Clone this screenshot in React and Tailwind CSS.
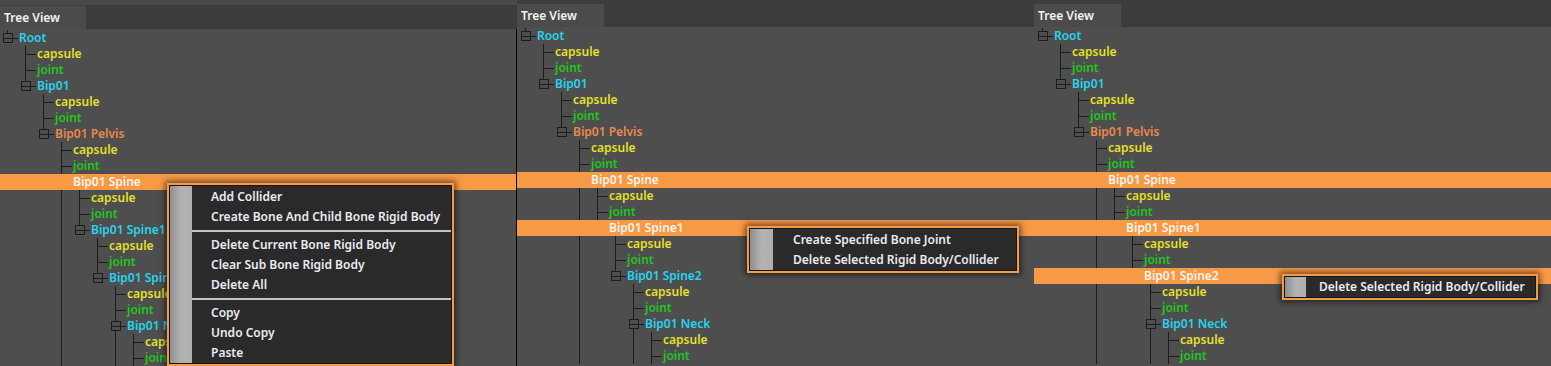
import React from "react";

const CYAN = "#27d4ef";
const YELLOW = "#e4e02c";
const GREEN = "#1fc61f";
const ORANGE = "#ec894c";
const LINE = "#1c1c1c";
const TREE_BG = "#4e4e4e";

// depth, label, colour, has expander box, last child, ancestor lines still running
const ROWS = [
  { d: 0, t: "Root", c: CYAN, box: true, last: true, anc: [] },
  { d: 1, t: "capsule", c: YELLOW, anc: [] },
  { d: 1, t: "joint", c: GREEN, anc: [] },
  { d: 1, t: "Bip01", c: CYAN, box: true, last: true, anc: [] },
  { d: 2, t: "capsule", c: YELLOW, anc: [] },
  { d: 2, t: "joint", c: GREEN, anc: [] },
  { d: 2, t: "Bip01 Pelvis", c: ORANGE, box: true, last: true, anc: [] },
  { d: 3, t: "capsule", c: YELLOW, anc: [] },
  { d: 3, t: "joint", c: GREEN, anc: [] },
  { d: 3, t: "Bip01 Spine", c: CYAN, box: true, anc: [] },
  { d: 4, t: "capsule", c: YELLOW, anc: [3] },
  { d: 4, t: "joint", c: GREEN, anc: [3] },
  { d: 4, t: "Bip01 Spine1", c: CYAN, box: true, last: true, anc: [3] },
  { d: 5, t: "capsule", c: YELLOW, anc: [3] },
  { d: 5, t: "joint", c: GREEN, anc: [3] },
  { d: 5, t: "Bip01 Spine2", c: CYAN, box: true, last: true, anc: [3] },
  { d: 6, t: "capsule", c: YELLOW, anc: [3] },
  { d: 6, t: "joint", c: GREEN, anc: [3] },
  { d: 6, t: "Bip01 Neck", c: CYAN, box: true, anc: [3] },
  { d: 7, t: "capsule", c: YELLOW, anc: [3, 6] },
  { d: 7, t: "joint", c: GREEN, anc: [3, 6] },
];

const Guides = ({ row, hidden }) => {
  const { d } = row;
  const cx = 7 + 18 * d;
  return (
    <svg width={19 + 18 * d} height="16" className="shrink-0">
      {!hidden && (
        <g fill={LINE}>
          {row.anc.map((k) => (
            <rect key={k} x={7 + 18 * k} y="0" width="1" height="16" />
          ))}
          <rect x={cx} y="0" width="1" height={row.last ? 9 : 16} />
          {row.box && (
            <rect x={cx - 3.5} y="3.5" width="9" height="9" fill={TREE_BG} stroke={LINE} strokeWidth="1" />
          )}
          {row.box ? (
            <rect x={cx - 4} y="8" width="15" height="1" />
          ) : (
            <rect x={cx} y="8" width="11" height="1" />
          )}
        </g>
      )}
    </svg>
  );
};

const TreeRow = ({ row, selected, inset }) => (
  <div
    className={`flex h-4 items-center ${inset ? "pl-px" : ""} ${selected ? "bg-[#f79a46]" : ""}`}
  >
    <Guides row={row} hidden={selected} />
    <span
      className="whitespace-nowrap text-[12px] font-semibold leading-4"
      style={{ color: selected ? "#fff4ef" : row.c }}
    >
      {row.t}
    </span>
  </div>
);

const ContextMenu = ({ className, stripeW, padL, groups, padTop }) => (
  <div className={`absolute border-2 border-[#f79a46] shadow-[0_0_6px_2px_rgba(0,0,0,0.55)] ${className}`}>
    <div className="flex border border-[#141414] bg-[#2a2a2a]">
      <div
        className="shrink-0 bg-linear-to-r from-[#8f8f8f] via-[#b3b3b3] to-[#afafaf]"
        style={{ width: stripeW }}
      />
      <div className={`flex-1 ${padTop ? "pt-px" : ""}`}>
        {groups.map((items, gi) => (
          <div key={gi}>
            {gi > 0 && <div className="my-[3px] h-[2px] bg-[#c4c4c4]" />}
            {items.map((it) => (
              <div
                key={it}
                className="flex h-5 items-center whitespace-nowrap text-[12px] font-semibold text-[#ebebf2]"
                style={{ paddingLeft: padL }}
              >
                {it}
              </div>
            ))}
          </div>
        ))}
      </div>
    </div>
  </div>
);

const Panel = ({ first, selected, menu }) => (
  <div className="relative w-[517px] shrink-0 overflow-hidden">
    {first && <div className="h-[5px] bg-[#494949]" />}
    <div className={`flex bg-[#3c3c3c] ${first ? "h-6" : "h-[27px]"}`}>
      <div
        className={`flex h-[23px] items-center bg-[#4b4b4b] pl-1 text-[12px] font-semibold text-[#f2f2f2] ${
          first ? "mt-px w-[86px]" : "mt-1 w-[87px]"
        }`}
      >
        Tree View
      </div>
    </div>
    <div
      className={`bg-[#4e4e4e] pt-px ${first ? "h-[337px] border-r border-black" : "h-[339px]"}`}
    >
      {ROWS.map((r, i) => (
        <TreeRow key={i} row={r} selected={selected.includes(i)} inset={!first} />
      ))}
    </div>
    {menu}
  </div>
);

export default function App() {
  return (
    <div
      className="flex h-[366px] w-[1551px] overflow-hidden bg-[#4e4e4e]"
      style={{ fontFamily: '"Noto Sans", "Open Sans", sans-serif' }}
    >
      <Panel
        first
        selected={[9]}
        menu={
          <ContextMenu
            className="left-[167px] top-[183px] w-[287px]"
            stripeW={22}
            padL={19}
            padTop
            groups={[
              ["Add Collider", "Create Bone And Child Bone Rigid Body"],
              ["Delete Current Bone Rigid Body", "Clear Sub Bone Rigid Body", "Delete All"],
              ["Copy", "Undo Copy", "Paste"],
            ]}
          />
        }
      />
      <Panel
        selected={[9, 12]}
        menu={
          <ContextMenu
            className="left-[230px] top-[226px] w-[272px]"
            stripeW={23}
            padL={20}
            padTop
            groups={[["Create Specified Bone Joint", "Delete Selected Rigid Body/Collider"]]}
          />
        }
      />
      <Panel
        selected={[9, 12, 15]}
        menu={
          <ContextMenu
            className="left-[248px] top-[274px] w-[256px]"
            stripeW={21}
            padL={13}
            groups={[["Delete Selected Rigid Body/Collider"]]}
          />
        }
      />
    </div>
  );
}
